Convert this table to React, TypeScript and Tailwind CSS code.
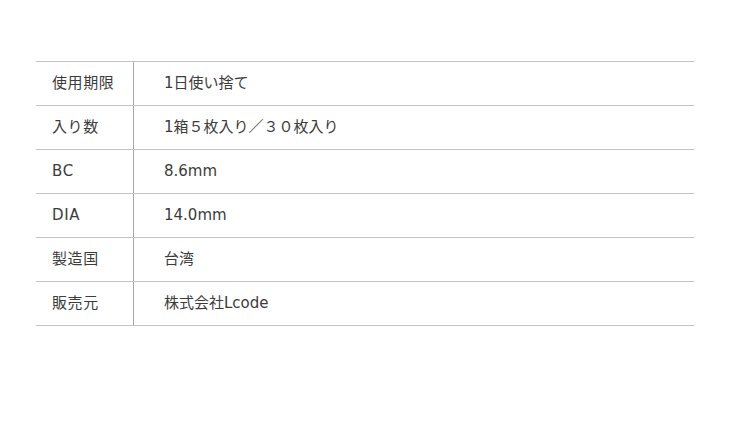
const rows: [string, string][] = [
  ["使用期限", "1日使い捨て"],
  ["入り数", "1箱５枚入り／３０枚入り"],
  ["BC", "8.6mm"],
  ["DIA", "14.0mm"],
  ["製造国", "台湾"],
  ["販売元", "株式会社Lcode"],
];

export default function App() {
  return (
    <div className="w-[730px] h-[434px] bg-white pt-[61px] px-[36px] font-['DejaVu_Sans','Noto_Sans_CJK_JP',sans-serif] text-[15px] text-[#3c3c3c]">
      <div className="w-[658px] border-t border-[#c4c4c4]">
        {rows.map(([k, v]) => (
          <div key={k} className="flex h-[44px] border-b border-[#c4c4c4]">
            <div className="w-[98px] shrink-0 flex items-center pl-[16px] border-r border-[#a8a8a8] tracking-[0.04em]">
              {k}
            </div>
            <div className="flex items-center pl-[30px]">{v}</div>
          </div>
        ))}
      </div>
    </div>
  );
}
